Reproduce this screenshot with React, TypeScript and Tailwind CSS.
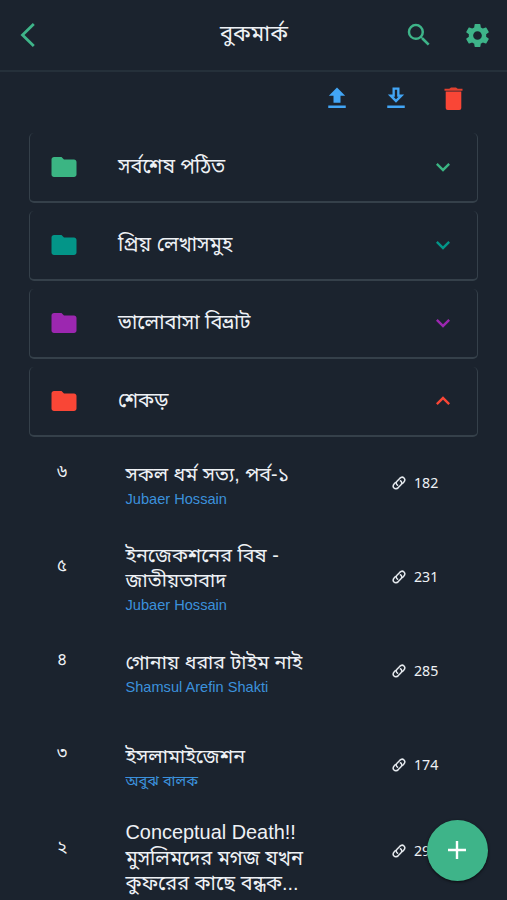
import { MdExpandLess, MdExpandMore, MdFolder, MdSearch, MdSettings } from "react-icons/md";

const folders = [
  { name: "সর্বশেষ পঠিত", color: "text-[#3bb583]", open: false },
  { name: "প্রিয় লেখাসমুহ", color: "text-[#039588]", open: false },
  { name: "ভালোবাসা বিভ্রাট", color: "text-[#9c27b0]", open: false },
  { name: "শেকড়", color: "text-[#f94636]", open: true },
];

const bookmarks = [
  { no: "৬", title: "সকল ধর্ম সত্য, পর্ব-১", author: "Jubaer Hossain", links: 182 },
  { no: "৫", title: "ইনজেকশনের বিষ - জাতীয়তাবাদ", author: "Jubaer Hossain", links: 231 },
  { no: "৪", title: "গোনায় ধরার টাইম নাই", author: "Shamsul Arefin Shakti", links: 285 },
  { no: "৩", title: "ইসলামাইজেশন", author: "অবুঝ বালক", links: 174 },
];

export default function App() {
  return (
    <div className="relative flex h-[900px] w-full flex-col overflow-hidden bg-[#1b232e] font-['Liberation_Sans','Noto_Sans_Bengali','Noto_Sans',sans-serif] text-[#eef1f5]">
      <Header />

      {/* Actions */}
      <div className="flex h-[61px] shrink-0 items-center justify-end gap-[31px] pr-[41px] pb-[9px]">
        <UploadIcon />
        <DownloadIcon />
        <TrashIcon />
      </div>

      {/* Folders */}
      <div className="flex flex-col gap-2 px-[29px]">
        {folders.map((f) => (
          <div key={f.name} className="flex h-[70px] items-center rounded-[5px] border-x border-b-2 border-[#35404a] pl-[19px]">
            <MdFolder className={`h-[30px] w-[30px] ${f.color}`} />
            <h2 className="ml-[39px] flex-1 pb-[2px] text-[20px] leading-7">{f.name}</h2>
            {f.open ? <MdExpandLess className={`mr-5 h-7 w-7 ${f.color}`} /> : <MdExpandMore className={`mr-5 h-7 w-7 ${f.color}`} />}
          </div>
        ))}
      </div>

      {/* Bookmarks in the open folder */}
      {bookmarks.map((b) => (
        <div key={b.no} className="flex h-[94px] shrink-0 items-center pb-[2px] pl-[57px]">
          <span className="mb-[22px] w-[68.5px] text-[17px] leading-5">{b.no}</span>
          <div className="w-[190px] pt-[6px]">
            <h3 className="text-[19.7px] leading-[25px]">{b.title}</h3>
            <p className="text-[14.6px] leading-[24px] text-[#3b91dc]">{b.author}</p>
          </div>
          <LinkCount count={b.links} />
        </div>
      ))}
      <div className="flex h-[110px] shrink-0 items-start pl-[57px]">
        <span className="mt-[25px] w-[68.5px] text-[17px] leading-5">২</span>
        <h3 className="mt-[7px] w-[190px] text-[19.9px] leading-[25.5px]">
          Conceptual Death!! মুসলিমদের মগজ যখন কুফরের কাছে বন্ধক...
        </h3>
        <div className="mt-7 flex">
          <LinkCount count={290} />
        </div>
      </div>

      <button className="absolute top-[820px] left-[427px] flex h-[61px] w-[61px] items-center justify-center rounded-full bg-[#3eb489] pr-[2px] pb-[2px] shadow-[0_1px_3px_#000000aa]">
        <svg viewBox="0 0 18 18" className="h-[18px] w-[18px]" stroke="white" strokeWidth="2.4">
          <path d="M9 0v18M0 9h18" />
        </svg>
      </button>
    </div>
  );
}

function Header() {
  return (
    <header className="flex h-[72px] shrink-0 items-center border-b-2 border-[#25303a] pr-[15px] pl-5">
      <svg viewBox="0 0 15 24" className="h-6 w-[15px]" fill="none" stroke="#3eb489" strokeWidth="2.8">
        <path d="M13.8 1 2.5 12l11.3 11" />
      </svg>
      <h1 className="ml-[185px] flex-1 pb-[2px] text-[22px] leading-7">বুকমার্ক</h1>
      <MdSearch className="h-[30px] w-[30px] text-[#3eb489]" />
      <MdSettings className="ml-[29px] h-[29px] w-[29px] text-[#3eb489]" />
    </header>
  );
}

function LinkCount({ count }: { count: number }) {
  return (
    <div className="ml-[76.5px] flex items-center gap-2">
      <svg viewBox="0 0 14 14" className="h-[14px] w-[14px]" fill="none" stroke="#e4e8ed" strokeWidth="1.5" strokeLinecap="round">
        <path d="M5.6 9.2C4.1 8.5 3.8 6.6 5 5.3l2.7-2.9c1.3-1.3 3.2-1.5 4.3-.4s.9 2.9-.3 4.2L10.5 7.5" />
        <path d="M8.4 4.8c1.5.7 1.8 2.6.6 3.900l-2.700 2.900c-1.300 1.300-3.200 1.500-4.300.4s-.9-2.900.3-4.200L3.500 6.500" />
      </svg>
      <span className="font-['Noto_Sans',sans-serif] text-[14.2px] leading-5">{count}</span>
    </div>
  );
}

function UploadIcon() {
  return (
    <svg viewBox="0 0 24 24" className="h-7 w-7" fill="#42a5f5">
      <path d="M9 16v-6H5l7-7 7 7h-4v6H9zM4.500 18.500h15v2h-15z" />
    </svg>
  );
}

function DownloadIcon() {
  return (
    <svg viewBox="0 0 24 24" className="h-7 w-7" fill="#42a5f5">
      <path d="M13 5v6h1.170L12 13.170 9.830 11H11V5h2m2-2H9v6H5l7 7 7-7h-4V3zM4.500 18.500h15v2h-15z" />
    </svg>
  );
}

function TrashIcon() {
  return (
    <svg viewBox="0 0 25 25" className="h-[25px] w-[25px]" fill="#f94636">
      <path d="M4.700 5.500h15.600v16.600a2 2 0 0 1-2 2H6.700a2 2 0 0 1-2-2z" />
      <path d="M3.500 2.800h4.800L10 1.500h5l1.700 1.300h4.800v1.900h-18z" fill="#e0402f" />
    </svg>
  );
}
